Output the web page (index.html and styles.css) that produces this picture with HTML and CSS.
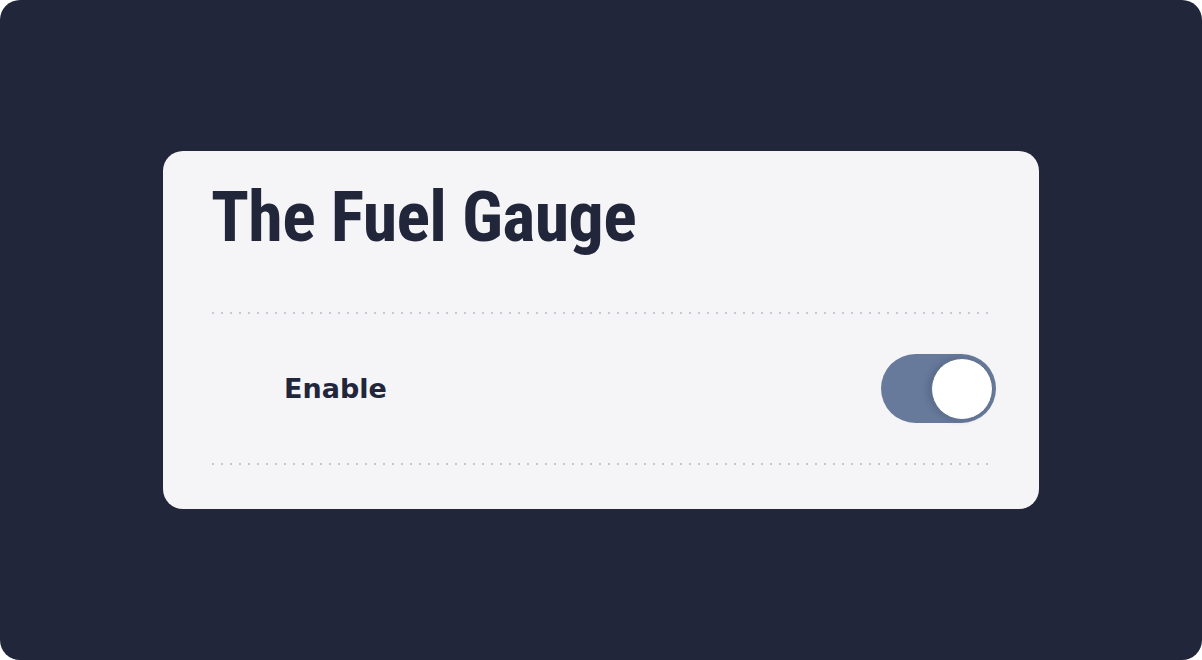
FILE: index.html
```html
<!DOCTYPE html>
<html lang="en">
<head>
<meta charset="utf-8">
<title>The Fuel Gauge</title>
<link rel="stylesheet" href="styles.css">
</head>
<body>
  <main class="stage">
    <section class="card">
      <h1 class="card-title">The Fuel Gauge</h1>
      <div class="divider"></div>
      <div class="setting-row">
        <span class="setting-label">Enable</span>
        <button class="toggle is-on" type="button" role="switch" aria-checked="true" aria-label="Enable">
          <span class="toggle-knob"></span>
        </button>
      </div>
      <div class="divider"></div>
    </section>
  </main>
</body>
</html>
```
FILE: styles.css
```css
html, body {
  margin: 0;
  padding: 0;
  background: #ffffff;
}

.stage {
  width: 1202px;
  height: 660px;
  box-sizing: border-box;
  background: #22263a;
  border-radius: 20px;
  display: flex;
  align-items: center;
  justify-content: center;
}

.card {
  width: 876px;
  height: 358px;
  box-sizing: border-box;
  background: #f5f5f7;
  border-radius: 20px;
  padding: 26px 46px 0 48px;
  display: flex;
  flex-direction: column;
}

.card-title {
  margin: 0 0 55px;
  height: 80px;
  font-family: "Roboto Condensed", "Open Sans", sans-serif;
  font-stretch: 75%;
  font-weight: 700;
  font-size: 70px;
  line-height: 80px;
  letter-spacing: -0.6px;
  color: #22263a;
}

.divider {
  height: 2px;
  margin-left: 1px;
  background-image: linear-gradient(to right, #c8c9cf 0, #c8c9cf 2px, transparent 2px);
  background-size: 9px 2px;
  background-repeat: repeat-x;
}

.setting-row {
  height: 149px;
  display: flex;
  align-items: center;
  justify-content: space-between;
  padding-left: 73px;
}

.setting-label {
  font-family: "DejaVu Sans", "Liberation Sans", sans-serif;
  font-weight: 700;
  font-size: 27px;
  color: #22263a;
}

.toggle {
  width: 115px;
  height: 69px;
  margin-right: -3px;
  padding: 0 3px 0 0;
  border: none;
  border-radius: 35px;
  background: #687a9c;
  display: flex;
  align-items: center;
  justify-content: flex-end;
  cursor: pointer;
}

.toggle-knob {
  width: 62px;
  height: 62px;
  box-sizing: border-box;
  border-radius: 50%;
  background: #ffffff;
  border: 1px solid #5d6e8e;
  box-shadow: -3px 0 6px rgba(40, 50, 75, 0.25);
}
```
